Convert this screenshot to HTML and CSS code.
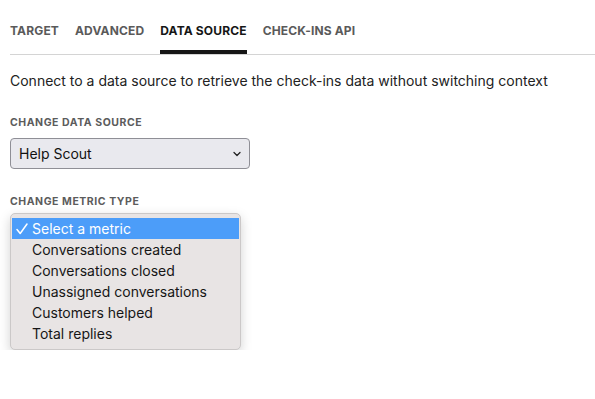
FILE: index.html
```html
<!DOCTYPE html>
<html lang="en">
<head>
<meta charset="utf-8">
<title>Data source</title>
<link rel="stylesheet" href="styles.css">
</head>
<body>
<div class="page">
  <nav class="tabs">
    <a class="tab">TARGET</a>
    <a class="tab">ADVANCED</a>
    <a class="tab active">DATA SOURCE</a>
    <a class="tab">CHECK-INS API</a>
  </nav>
  <p class="intro">Connect to a data source to retrieve the check-ins data without switching context</p>
  <div class="field">
    <div class="label">CHANGE DATA SOURCE</div>
    <div class="select">
      <span>Help Scout</span>
      <svg class="chev" width="8" height="6" viewBox="0 0 8 6"><path d="M1 1.5 L4 4.5 L7 1.5" fill="none" stroke="#222" stroke-width="1.3" stroke-linecap="round" stroke-linejoin="round"/></svg>
    </div>
  </div>
  <div class="field metric">
    <div class="label">CHANGE METRIC TYPE</div>
    <ul class="popup">
      <li class="opt selected"><svg class="check" width="12" height="12" viewBox="0 0 12 12"><path d="M1 6.5 L4.2 10.5 L11 1" fill="none" stroke="#fff" stroke-width="1.5" stroke-linecap="round" stroke-linejoin="round"/></svg>Select a metric</li>
      <li class="opt">Conversations created</li>
      <li class="opt">Conversations closed</li>
      <li class="opt">Unassigned conversations</li>
      <li class="opt">Customers helped</li>
      <li class="opt">Total replies</li>
    </ul>
  </div>
</div>
</body>
</html>
```
FILE: styles.css
```css
* { box-sizing: border-box; }
html, body { margin: 0; padding: 0; background: #fff; }
body { font-family: Inter, "Noto Sans", sans-serif; color: #1f1f1f; }
.page { padding: 0 0 0 10px; }
.tabs {
  display: flex;
  gap: 16px;
  border-bottom: 1px solid #d4d4d4;
}
.tab {
  font-size: 12px;
  line-height: 16px;
  font-weight: 700;
  color: #5a5a5a;
  padding-top: 23px;
  padding-bottom: 11px;
  border-bottom: 4px solid transparent;
  letter-spacing: 0.15px;
}
.tab.active { color: #161616; border-bottom-color: #161616; }
.intro {
  margin: 16px 0 0;
  font-size: 14px;
  line-height: 20px;
  color: #222;
}
.field { margin-top: 25px; }
.label {
  font-size: 10.5px;
  line-height: 14px;
  font-weight: 700;
  color: #5c5c5c;
  letter-spacing: 0.55px;
}
.select {
  margin-top: 8px;
  width: 240px;
  height: 31px;
  border: 1px solid #8f8f96;
  border-radius: 4px;
  background: #e9e9ee;
  display: flex;
  align-items: center;
  justify-content: space-between;
  padding: 0 8px 0 8px;
  font-size: 14px;
  color: #111;
}
.chev { display: block; }
.metric { margin-top: 26px; }
.popup {
  list-style: none;
  margin: 4px 0 0;
  padding: 4px 1px 5px;
  width: 231px;
  background: #e8e4e4;
  border: 1px solid #cbc8c8;
  border-radius: 5px;
  box-shadow: 0 4px 12px rgba(0,0,0,0.18);
}
.opt {
  font-size: 14px;
  line-height: 21px;
  height: 21px;
  padding-left: 20px;
  color: #161616;
  position: relative;
}
.opt.selected { background: #4c9df9; color: #fff; }
.check {
  position: absolute;
  left: 4px;
  top: 5px;
}
```
